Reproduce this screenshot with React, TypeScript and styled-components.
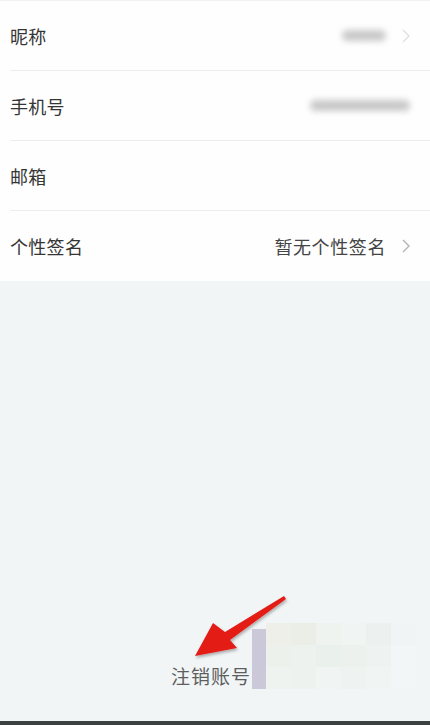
import React from "react";
import styled, { createGlobalStyle } from "styled-components";

const GlobalStyle = createGlobalStyle`
    html, body {
        margin: 0;
        padding: 0;
        background: #f1f5f6;
    }
    * {
        box-sizing: border-box;
    }
`;

const Page = styled.div`
    position: relative;
    display: flex;
    flex-direction: column;
    width: 430px;
    height: 725px;
    overflow: hidden;
    background: #f1f5f6;
    font-family: "Noto Sans CJK SC", "Noto Sans", sans-serif;
`;

const List = styled.div`
    display: flex;
    flex-direction: column;
    background: #fdfefd;
    border-top: 1px solid #f2f2f2;
`;

const Row = styled.div<{ last?: boolean }>`
    display: flex;
    align-items: center;
    justify-content: space-between;
    height: 70px;
    margin-left: 10px;
    padding-right: 20px;
    border-bottom: ${(p) => (p.last ? "none" : "1px solid #ededed")};
`;

const Label = styled.span`
    font-size: 18px;
    color: #353535;
    letter-spacing: 0.3px;
`;

const Right = styled.div`
    display: flex;
    align-items: center;
    gap: 16px;
`;

const Value = styled.span`
    font-size: 18px;
    color: #444;
    letter-spacing: 0.6px;
`;

const Blurred = styled.span<{ w: number }>`
    display: block;
    width: ${(p) => p.w}px;
    height: 11px;
    border-radius: 6px;
    background: #c8c8c8;
    filter: blur(3px);
`;

const Chevron = styled.svg<{ faint?: boolean }>`
    width: 8px;
    height: 14px;
    opacity: ${(p) => (p.faint ? 0.4 : 1)};
`;

const Spacer = styled.div`
    flex: 1;
`;

const Footer = styled.div`
    position: relative;
    display: flex;
    justify-content: center;
    height: 100px;
`;

const Logout = styled.span`
    margin-top: 41px;
    padding-right: 8px;
    font-size: 19px;
    letter-spacing: 1px;
    color: #5e5e5e;
`;

const Mosaic = styled.div`
    position: absolute;
    left: 252px;
    top: 2px;
    display: flex;
    height: 70px;
`;

const MosaicStrip = styled.div`
    width: 14px;
    margin-top: 6px;
    height: 60px;
    background: #cbc8da;
`;

const MosaicTiles = styled.div`
    display: grid;
    grid-template-columns: repeat(6, 25px);
    grid-template-rows: repeat(3, 22px);
`;

const Tile = styled.div<{ c: string }>`
    background: ${(p) => p.c};
`;

const Arrow = styled.svg`
    position: absolute;
    left: 185px;
    top: 590px;
    width: 110px;
    height: 80px;
`;

const BottomBar = styled.div`
    height: 4px;
    background: #3b4041;
`;

const tiles = [
    "#efefe9", "#eaeee6", "#eef3f0", "#f0f4f2", "#ecf1ef", "#f0f4f5",
    "#edf1ec", "#eef2ee", "#eaf0ec", "#ecf1ee", "#eef3f1", "#f2f6f6",
    "#eff3f0", "#edf2ef", "#f0f4f2", "#eef3f1", "#f0f5f4", "#f2f6f7",
];

const ChevronIcon = ({ faint }: { faint?: boolean }) => (
    <Chevron viewBox="0 0 8 14" faint={faint}>
        <path d="M1 1 L7 7 L1 13" fill="none" stroke="#b4b4b4" strokeWidth="1.4" />
    </Chevron>
);

const App = () => {
    return (
        <Page>
            <GlobalStyle />
            <List>
                <Row>
                    <Label>昵称</Label>
                    <Right>
                        <Blurred w={44} />
                        <ChevronIcon faint />
                    </Right>
                </Row>
                <Row>
                    <Label>手机号</Label>
                    <Right>
                        <Blurred w={100} />
                    </Right>
                </Row>
                <Row>
                    <Label>邮箱</Label>
                </Row>
                <Row last>
                    <Label>个性签名</Label>
                    <Right>
                        <Value>暂无个性签名</Value>
                        <ChevronIcon />
                    </Right>
                </Row>
            </List>
            <Spacer />
            <Footer>
                <Logout>注销账号</Logout>
                <Mosaic>
                    <MosaicStrip />
                    <MosaicTiles>
                        {tiles.map((c, i) => (
                            <Tile key={i} c={c} />
                        ))}
                    </MosaicTiles>
                </Mosaic>
            </Footer>
            <BottomBar />
            <Arrow viewBox="0 0 110 80">
                <defs>
                    <filter id="sh" x="-20%" y="-20%" width="140%" height="140%">
                        <feDropShadow dx="1" dy="2" stdDeviation="1.5" floodColor="#000" floodOpacity="0.3" />
                    </filter>
                </defs>
                <path
                    d="M99 6 L40 42 L28 33 L10 66 L52 58 L45 50 L101 9 Z"
                    fill="#e41b17"
                    filter="url(#sh)"
                />
            </Arrow>
        </Page>
    );
};

export default App;
